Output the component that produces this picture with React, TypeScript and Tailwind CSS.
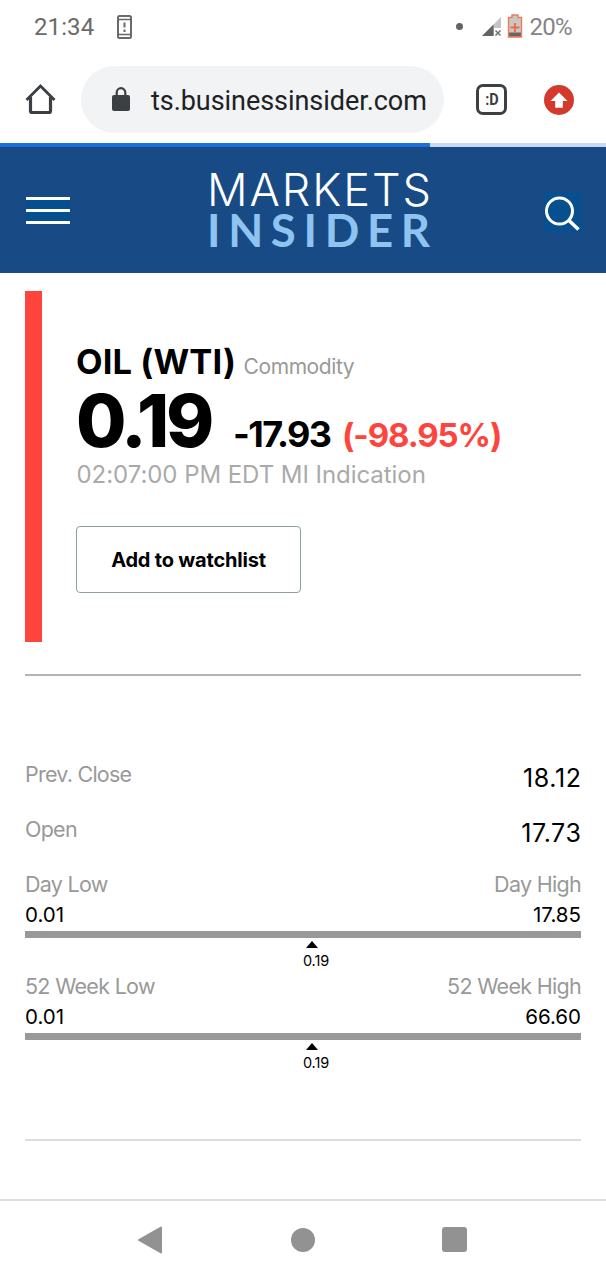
import React from "react";

function StatusBar() {
  return (
    <div className="flex h-[54px] items-center pl-[34px] pr-[34px] font-[Roboto,sans-serif] text-[24px] font-medium leading-[54px] text-[#6a6a6a]">
      <span className="font-normal tracking-[0.1px]">21:34</span>
      <svg className="ml-[23px] mt-[-1px]" width="16" height="24" viewBox="0 0 16 24" fill="none">
        <rect x="1" y="1" width="13" height="22" rx="1.5" stroke="#6a6a6a" strokeWidth="2" />
        <path d="M1 4.5h13M1 19.5h13" stroke="#6a6a6a" strokeWidth="1.6" />
        <path d="M7.5 7.5v5M7.5 14.5v2.4" stroke="#6a6a6a" strokeWidth="2" />
      </svg>
      <span className="ml-auto mr-[19px] mt-[-2px] size-[7px] rounded-full bg-[#636363]" />
      <svg className="mr-[5px]" width="20" height="20" viewBox="0 0 20 20">
        <path d="M0 19 19 0v11h-7v8Z" fill="#c4c4c4" />
        <path d="M0 19 11.500 7.500V19Z" fill="#636363" />
        <path d="m13.500 13.500 5 5m0-5-5 5" stroke="#737373" strokeWidth="1.600" />
      </svg>
      <svg className="mt-[-2px]" width="16" height="24" viewBox="0 0 16 24">
        <path d="M5 1h6v3h3.500v19h-13V4H5Z" fill="#c9c9c0" />
        <path d="M1.500 18.500h13V23h-13Z" fill="#6c655f" />
        <path d="M5 1h6v2.500h3.500V23h-13V3.500H5Z" fill="none" stroke="#ee7961" strokeWidth="1.400" />
        <path d="M8 9v9M3.500 13.500h9" stroke="#ee6750" strokeWidth="1.800" />
      </svg>
      <span className="ml-[7px] font-normal tracking-[-0.7px] text-[#858585]">20%</span>
    </div>
  );
}

function BrowserBar() {
  return (
    <div className="flex h-[89px] items-center pt-[2px]">
      <svg className="ml-[25px] mt-[-2px]" width="31" height="32" viewBox="0 0 31 32" fill="none">
        <path d="M1.500 17 15.500 3l14 14" stroke="#3c4043" strokeWidth="2.800" />
        <path d="M5.500 14v14q0 1.500 1.500 1.500h17q1.500 0 1.500-1.500V14" stroke="#3c4043" strokeWidth="3.200" />
      </svg>
      <div className="ml-[25px] flex h-[67px] w-[363px] items-center rounded-full bg-[#f1f3f5] pl-[31px]">
        <svg className="mt-[-2px]" width="18" height="24" viewBox="0 0 18 24">
          <rect y="8" width="18" height="16" rx="2" fill="#3c4043" />
          <path d="M4.700 9V5.500a4.300 4.300 0 0 1 8.600 0V9" fill="none" stroke="#3c4043" strokeWidth="2.200" />
        </svg>
        <span className="ml-[21px] whitespace-nowrap pt-[3px] font-[Roboto,sans-serif] text-[27px] leading-[64px] tracking-[-0.05px] text-[#202124]">
          ts.businessinsider.com
        </span>
      </div>
      <div className="ml-[32px] flex size-[31px] items-center justify-center rounded-[7px] border-[3px] border-[#3c4043] font-[Roboto,sans-serif] text-[17px] font-bold leading-none text-[#3c4043]">
        <span className="scale-x-[0.85]">:D</span>
      </div>
      <svg className="ml-[37px]" width="30" height="30" viewBox="0 0 30 30">
        <circle cx="15" cy="15" r="15" fill="#d23a2e" />
        <path d="m15 7.500 8.500 8.500h-4.700v6.700h-7.600V16H6.500Z" fill="#fff" />
      </svg>
    </div>
  );
}

function SiteHeader() {
  return (
    <header className="flex h-[126px] items-start bg-[#184b85] pl-[26px]">
      <div className="mt-[50px] flex h-[27px] w-[44px] flex-col justify-between bg-[#034f8f]">
        <div className="h-[3px] bg-white" />
        <div className="h-[3px] bg-white" />
        <div className="h-[3px] bg-white" />
      </div>
      <svg className="ml-[130px]" width="250" height="120" viewBox="200 147 250 120">
        <text x="207" y="206" textLength="224" lengthAdjust="spacing" fontFamily="Inter, sans-serif" fontSize="45" fontWeight="300" fill="#fff">MARKETS</text>
        <text x="207" y="246.500" textLength="223" lengthAdjust="spacing" fontFamily="Lato, sans-serif" fontSize="45.500" fontWeight="700" fill="#8fc3f0">INSIDER</text>
      </svg>
      <svg className="ml-[94px] mt-[45px] bg-[#074f8e]" width="38" height="40" viewBox="0 0 38 40" fill="none">
        <circle cx="15.500" cy="19" r="13" stroke="#fff" strokeWidth="3" />
        <path d="m25 28.500 9.500 9" stroke="#fff" strokeWidth="3.600" />
      </svg>
    </header>
  );
}

function Quote() {
  return (
    <section className="mx-[25px] mt-[18px] flex h-[351px] border-l-[17px] border-[#ff443e] pl-[34px]">
      <div className="flex flex-col whitespace-nowrap">
        <div className="mt-[51px] flex h-[40px] items-baseline leading-[40px]">
          <h1 className="w-[167.5px] text-[34.5px] font-bold tracking-[0.1px]">OIL (WTI)</h1>
          <span className="text-[21px] tracking-[-0.4px] text-[#999]">Commodity</span>
        </div>
        <div className="flex h-[78px] items-baseline leading-[78px]">
          <span className="w-[157px] text-[73px] font-extrabold tracking-[-3.2px]">0.19</span>
          <span className="w-[109px] text-[36px] font-bold tracking-[-1.6px]">-17.93</span>
          <span className="text-[33px] font-bold tracking-[-1.1px] text-[#ff443e]">(-98.95%)</span>
        </div>
        <div className="ml-[0.5px] h-[30px] text-[24px] leading-[30px] tracking-[-0.05px] text-[#aaa]">02:07:00 PM EDT MI Indication</div>
        <button className="mt-[36px] h-[67px] w-[225px] rounded-[4px] border-[1.5px] border-[#8d9ea5] text-[20px] font-bold tracking-[-0.2px]">
          Add to watchlist
        </button>
      </div>
    </section>
  );
}

function Row({ label, value }: { label: string; value: string }) {
  return (
    <div className="flex h-[55px] justify-between leading-[30px]">
      <span className="text-[21.5px] tracking-[-0.75px] text-[#999]">{label}</span>
      <span className="mr-[-0.5px] pt-[4px] text-[25px] tracking-[0.6px]">{value}</span>
    </div>
  );
}

function Range({ name, low, high, current }: { name: string; low: string; high: string; current: string }) {
  return (
    <div className="h-[102px]">
      <div className="flex h-[30px] justify-between text-[21.5px] leading-[30px] tracking-[-0.7px] text-[#999]">
        <span>{name} Low</span>
        <span>{name} High</span>
      </div>
      <div className="flex h-[32px] justify-between text-[20.5px] leading-[32px]">
        <span>{low}</span>
        <span>{high}</span>
      </div>
      <div className="h-[7px] bg-[#999]" />
      <div className="ml-[278px] flex w-[26px] flex-col items-center pt-[3px]">
        <svg className="mr-[8px]" width="12" height="7" viewBox="0 0 12 7">
          <path d="M6 0 12 7H0Z" fill="#000" />
        </svg>
        <span className="h-[24px] text-[14.5px] leading-[26px] tracking-[-0.1px]">{current}</span>
      </div>
    </div>
  );
}

export default function App() {
  return (
    <div className="flex h-[1280px] w-[606px] flex-col overflow-hidden bg-white font-[Inter,sans-serif] text-black">
      <StatusBar />
      <BrowserBar />
      <div className="h-[4px] shrink-0 bg-[#c9daf3]">
        <div className="h-full w-[430px] bg-[#1e70d9]" />
      </div>
      <SiteHeader />
      <Quote />
      <div className="mx-[25px] mt-[32px] h-[2px] shrink-0 bg-[#b4b4b4]" />
      <section className="mx-[25px] mt-[83px] flex flex-col">
        <Row label="Prev. Close" value="18.12" />
        <Row label="Open" value="17.73" />
        <Range name="Day" low="0.01" high="17.85" current="0.19" />
        <Range name="52 Week" low="0.01" high="66.60" current="0.19" />
      </section>
      <div className="mx-[25px] mt-[66px] h-[1.5px] shrink-0 bg-[#ddd]" />
      <nav className="mt-auto flex h-[81px] items-center border-t-2 border-[#dedede] pb-[2px]">
        <svg className="ml-[138px]" width="24" height="28" viewBox="0 0 24 28">
          <path d="M1 14 23 1.500v25Z" fill="#929292" stroke="#929292" strokeWidth="2" strokeLinejoin="round" />
        </svg>
        <div className="ml-[129px] size-[24px] rounded-full bg-[#929292]" />
        <div className="ml-[127px] size-[25px] rounded-[3px] bg-[#929292]" />
      </nav>
    </div>
  );
}
